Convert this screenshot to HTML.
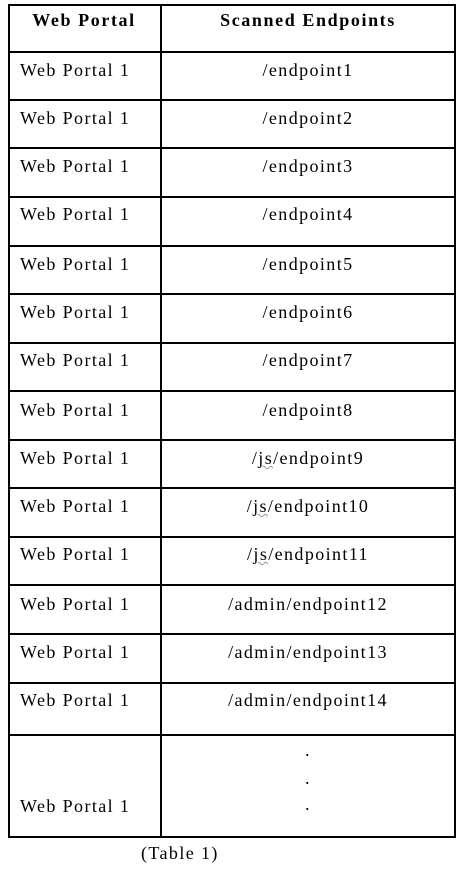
<!DOCTYPE html>
<html><head><meta charset="utf-8"><style>
body{margin:0;width:466px;height:870px;background:#fff;position:relative;overflow:hidden;font-family:"Liberation Serif",serif;font-size:18px;letter-spacing:1.4px;color:#000}
.h{position:absolute;height:2px;background:#000;left:8px;width:448px}
.v{position:absolute;width:2px;background:#000;top:4px;height:834px}
.t{position:absolute;line-height:20px;white-space:nowrap}
.l{left:20px}
.r{left:162px;width:292px;text-align:center}
b{font-weight:bold;letter-spacing:1.6px}
.sq{text-decoration:underline wavy #8a9aa8;text-decoration-thickness:1px}
</style></head><body>
<div class="v" style="left:8px"></div>
<div class="v" style="left:160px"></div>
<div class="v" style="left:454px"></div>
<div class="h" style="top:4px"></div>
<div class="h" style="top:51px"></div>
<div class="h" style="top:99px"></div>
<div class="h" style="top:147px"></div>
<div class="h" style="top:196px"></div>
<div class="h" style="top:245px"></div>
<div class="h" style="top:293px"></div>
<div class="h" style="top:342px"></div>
<div class="h" style="top:390px"></div>
<div class="h" style="top:439px"></div>
<div class="h" style="top:487px"></div>
<div class="h" style="top:536px"></div>
<div class="h" style="top:584px"></div>
<div class="h" style="top:633px"></div>
<div class="h" style="top:682px"></div>
<div class="h" style="top:734px"></div>
<div class="h" style="top:836px"></div>

<div class="t" style="left:8px;width:152px;text-align:center;top:10px"><b>Web Portal</b></div>
<div class="t r" style="top:10px"><b>Scanned Endpoints</b></div>

<div class="t l" style="top:60px">Web Portal 1</div><div class="t r" style="top:60px">/endpoint1</div>
<div class="t l" style="top:108px">Web Portal 1</div><div class="t r" style="top:108px">/endpoint2</div>
<div class="t l" style="top:156px">Web Portal 1</div><div class="t r" style="top:156px">/endpoint3</div>
<div class="t l" style="top:204px">Web Portal 1</div><div class="t r" style="top:204px">/endpoint4</div>
<div class="t l" style="top:254px">Web Portal 1</div><div class="t r" style="top:254px">/endpoint5</div>
<div class="t l" style="top:302px">Web Portal 1</div><div class="t r" style="top:302px">/endpoint6</div>
<div class="t l" style="top:350px">Web Portal 1</div><div class="t r" style="top:350px">/endpoint7</div>
<div class="t l" style="top:400px">Web Portal 1</div><div class="t r" style="top:400px">/endpoint8</div>
<div class="t l" style="top:448px">Web Portal 1</div><div class="t r" style="top:448px">/<span class="sq">js</span>/endpoint9</div>
<div class="t l" style="top:496px">Web Portal 1</div><div class="t r" style="top:496px">/<span class="sq">js</span>/endpoint10</div>
<div class="t l" style="top:544px">Web Portal 1</div><div class="t r" style="top:544px">/<span class="sq">js</span>/endpoint11</div>
<div class="t l" style="top:594px">Web Portal 1</div><div class="t r" style="top:594px">/admin/endpoint12</div>
<div class="t l" style="top:642px">Web Portal 1</div><div class="t r" style="top:642px">/admin/endpoint13</div>
<div class="t l" style="top:690px">Web Portal 1</div><div class="t r" style="top:690px">/admin/endpoint14</div>
<div class="t r" style="top:740px">.</div>
<div class="t r" style="top:768px">.</div>
<div class="t r" style="top:794px">.</div>
<div class="t l" style="top:796px">Web Portal 1</div>
<div class="t" style="left:141px;top:843px">(Table 1)</div>
</body></html>
